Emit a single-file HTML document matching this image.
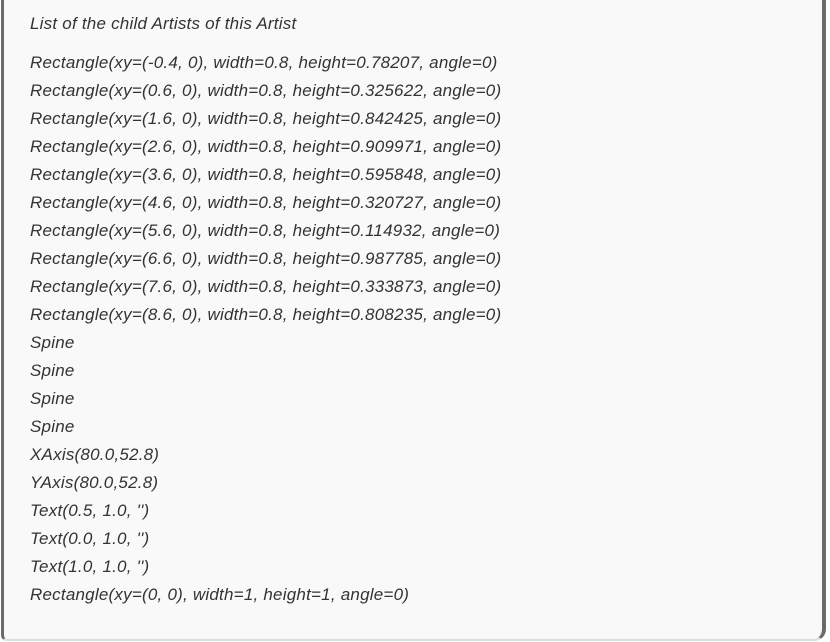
<!DOCTYPE html>
<html><head><style>
html,body{margin:0;padding:0;width:830px;height:642px;background:#fff;overflow:hidden}
.box{position:absolute;left:1px;top:-12px;width:825px;height:653px;background:#f9f9f9;border-left:3px solid #6b6b6b;border-right:4px solid #6b6b6b;border-bottom:2px solid #ddd;border-bottom-right-radius:12px;border-bottom-left-radius:6px;box-sizing:border-box}
.t{position:absolute;left:30px;font-family:"Liberation Sans",sans-serif;font-style:italic;font-size:17px;color:#333;white-space:nowrap;letter-spacing:0.22px}
</style></head><body>
<div class="box"></div>
<div class="t" style="top:14px">List of the child Artists of this Artist</div>
<div style="position:absolute;top:53px;left:0">
<div class="t" style="top:0">Rectangle(xy=(-0.4, 0), width=0.8, height=0.78207, angle=0)</div>
<div class="t" style="top:28px">Rectangle(xy=(0.6, 0), width=0.8, height=0.325622, angle=0)</div>
<div class="t" style="top:56px">Rectangle(xy=(1.6, 0), width=0.8, height=0.842425, angle=0)</div>
<div class="t" style="top:84px">Rectangle(xy=(2.6, 0), width=0.8, height=0.909971, angle=0)</div>
<div class="t" style="top:112px">Rectangle(xy=(3.6, 0), width=0.8, height=0.595848, angle=0)</div>
<div class="t" style="top:140px">Rectangle(xy=(4.6, 0), width=0.8, height=0.320727, angle=0)</div>
<div class="t" style="top:168px">Rectangle(xy=(5.6, 0), width=0.8, height=0.114932, angle=0)</div>
<div class="t" style="top:196px">Rectangle(xy=(6.6, 0), width=0.8, height=0.987785, angle=0)</div>
<div class="t" style="top:224px">Rectangle(xy=(7.6, 0), width=0.8, height=0.333873, angle=0)</div>
<div class="t" style="top:252px">Rectangle(xy=(8.6, 0), width=0.8, height=0.808235, angle=0)</div>
<div class="t" style="top:280px">Spine</div>
<div class="t" style="top:308px">Spine</div>
<div class="t" style="top:336px">Spine</div>
<div class="t" style="top:364px">Spine</div>
<div class="t" style="top:392px">XAxis(80.0,52.8)</div>
<div class="t" style="top:420px">YAxis(80.0,52.8)</div>
<div class="t" style="top:448px">Text(0.5, 1.0, '')</div>
<div class="t" style="top:476px">Text(0.0, 1.0, '')</div>
<div class="t" style="top:504px">Text(1.0, 1.0, '')</div>
<div class="t" style="top:532px">Rectangle(xy=(0, 0), width=1, height=1, angle=0)</div>
</div>
</body></html>
